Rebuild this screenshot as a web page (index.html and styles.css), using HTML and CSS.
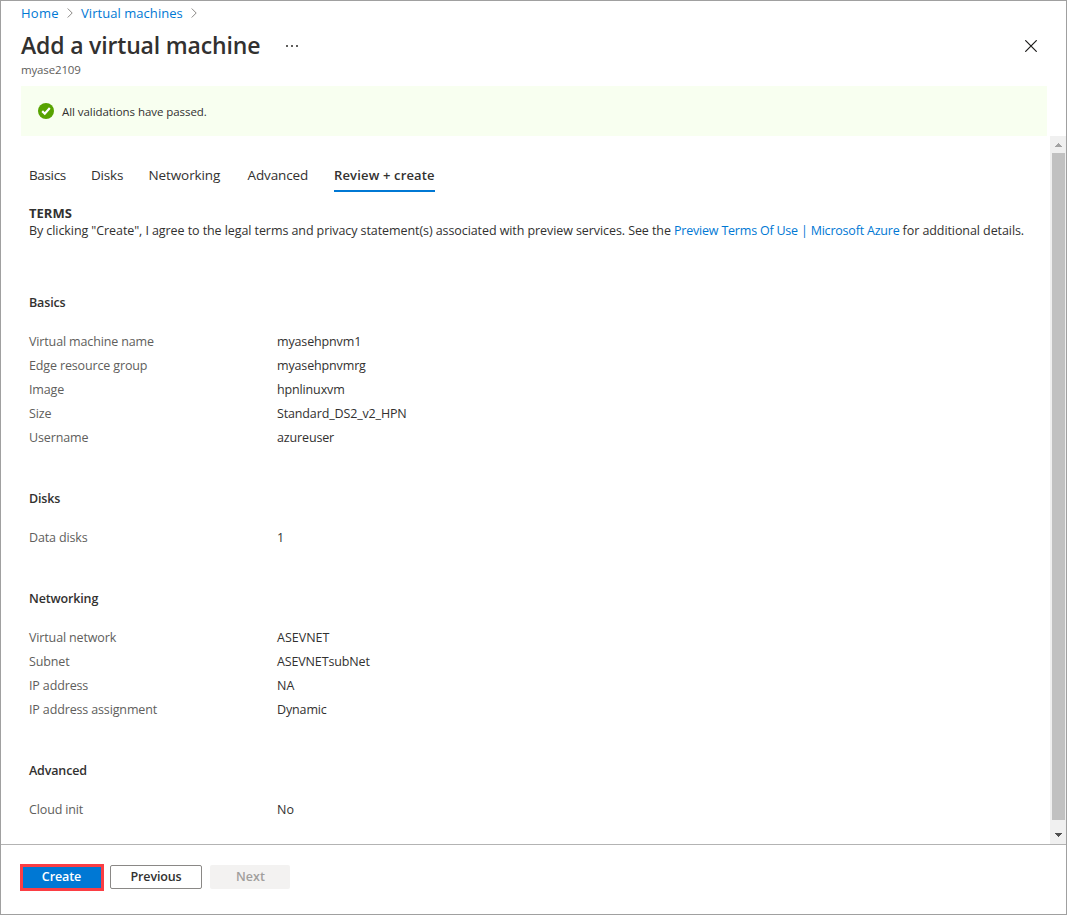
FILE: index.html
```
<!DOCTYPE html>
<html lang="en">
<head>
<meta charset="utf-8">
<title>Add a virtual machine</title>
<link rel="stylesheet" href="styles.css">
</head>
<body>
<div class="blade">
  <header class="header">
    <nav class="crumbs">
      <a class="crumb-home">Home</a>
      <svg class="chevron" width="6" height="10" viewBox="0 0 6 10"><path d="M.7.5 5.2 5 .7 9.5"/></svg>
      <a class="crumb-vms">Virtual machines</a>
      <svg class="chevron" width="6" height="10" viewBox="0 0 6 10"><path d="M.7.5 5.2 5 .7 9.5"/></svg>
    </nav>
    <div class="title-row">
      <h1 class="title">Add a virtual machine</h1>
      <svg class="more" width="12" height="2" viewBox="0 0 12 2"><path d="M0 0h2v2H0zM5 0h2v2H5zM10 0h2v2h-2z"/></svg>
      <svg class="close" width="12" height="12" viewBox="0 0 12 12"><path d="M.3.3l11.4 11.4M11.7.3.3 11.7"/></svg>
    </div>
    <div class="subtitle"><span>myase2109</span></div>
  </header>
  <div class="banner">
    <svg width="16" height="16" viewBox="0 0 16 16"><circle cx="8" cy="8" r="8" fill="#57a300"/><path d="M4.2 8.1l2.6 2.6 5-5.6" fill="none" stroke="#fff" stroke-width="2.2"/></svg>
    <span class="banner-text">All validations have passed.</span>
  </div>
  <div class="scroll-area">
    <main class="content">
      <nav class="tabs">
        <a class="tab tab-basics">Basics</a>
        <a class="tab tab-disks">Disks</a>
        <a class="tab tab-networking">Networking</a>
        <a class="tab tab-advanced">Advanced</a>
        <a class="tab tab-review">Review + create</a>
      </nav>
      <section class="terms">
        <h2 class="terms-title">TERMS</h2>
        <p class="terms-text">By clicking "Create", I agree to the legal terms and privacy statement(s) associated with preview services. See the <a>Preview Terms Of Use | Microsoft Azure</a> for additional details.</p>
      </section>
      <section class="group">
        <h3>Basics</h3>
        <dl>
          <dt>Virtual machine name</dt><dd>myasehpnvm1</dd>
          <dt>Edge resource group</dt><dd>myasehpnvmrg</dd>
          <dt>Image</dt><dd>hpnlinuxvm</dd>
          <dt>Size</dt><dd>Standard_DS2_v2_HPN</dd>
          <dt>Username</dt><dd>azureuser</dd>
        </dl>
      </section>
      <section class="group">
        <h3>Disks</h3>
        <dl>
          <dt>Data disks</dt><dd>1</dd>
        </dl>
      </section>
      <section class="group">
        <h3>Networking</h3>
        <dl>
          <dt>Virtual network</dt><dd class="caps">ASEVNET</dd>
          <dt>Subnet</dt><dd>ASEVNETsubNet</dd>
          <dt>IP address</dt><dd class="caps">NA</dd>
          <dt>IP address assignment</dt><dd>Dynamic</dd>
        </dl>
      </section>
      <section class="group">
        <h3>Advanced</h3>
        <dl>
          <dt>Cloud init</dt><dd class="caps">No</dd>
        </dl>
      </section>
    </main>
    <div class="scrollbar">
      <svg width="7" height="4" viewBox="0 0 7 4" fill="#a3a3a3"><path d="M3 0h1v1h1v1h1v1h1v1H0V3h1V2h1V1h1z"/></svg>
      <div class="thumb"></div>
      <svg width="7" height="4" viewBox="0 0 7 4" fill="#505050"><path d="M0 0h7v1H6v1H5v1H4v1H3V3H2V2H1V1H0z"/></svg>
    </div>
  </div>
  <footer class="footer">
    <button class="btn create">Create</button>
    <button class="btn previous">Previous</button>
    <button class="btn next" disabled>Next</button>
  </footer>
</div>
</body>
</html>
```
FILE: styles.css
```
* { box-sizing: border-box; }
body { margin: 0; background: #fff; }
h1, h2, h3, p, dl, dd { margin: 0; }
a { color: #0078d4; text-decoration: none; }
svg { display: block; flex: none; }

.blade {
  width: 1067px;
  height: 915px;
  border: 1px solid #a0a0a0;
  display: flex;
  flex-direction: column;
  font-family: "Open Sans", "Noto Sans", sans-serif;
  font-size: 12.5px;
  color: #323130;
  white-space: nowrap;
  overflow: hidden;
}

.header { height: 85px; padding: 0 20px; flex: none; }
.crumbs { display: flex; align-items: center; height: 24px; font-size: 13px; }
.crumb-home { width: 38px; letter-spacing: 0.25px; }
.crumb-vms { width: 102px; letter-spacing: 0.05px; }
.chevron { margin: 0 8px; fill: none; stroke: #8a8886; stroke-width: 1; }
.title-row { display: flex; align-items: center; height: 39px; padding-top: 1px; }
.title { width: 265px; font-size: 23px; font-weight: 600; line-height: 38px; letter-spacing: -0.17px; }
.more { margin-top: 2px; fill: #605e5c; }
.close { margin: 1px 9px 0 auto; fill: none; stroke: #1b1a19; stroke-width: 1.2; }
.subtitle { font-size: 11.5px; line-height: 12px; color: #605e5c; letter-spacing: -0.15px; }

.banner {
  display: flex;
  align-items: center;
  gap: 8px;
  flex: none;
  height: 50px;
  margin: 0 19px 0 20px;
  padding-left: 17px;
  background: #f8fff0;
}
.banner-text { font-size: 11.5px; letter-spacing: -0.06px; }

.scroll-area { display: flex; flex: none; height: 708px; }
.content { flex: 1; padding: 24px 0 0 28px; min-width: 0; }
.tabs { display: flex; height: 32px; font-size: 13.5px; }
.tab { color: #323130; line-height: 30px; height: 32px; }
.tab-basics { width: 62px; letter-spacing: -0.35px; }
.tab-disks { width: 57.5px; letter-spacing: -0.2px; }
.tab-networking { width: 99px; letter-spacing: -0.1px; }
.tab-advanced { width: 86.5px; letter-spacing: -0.12px; }
.tab-review { width: 101px; font-weight: 600; font-size: 13px; letter-spacing: 0.16px; border-bottom: 2px solid #0078d4; }

.terms { height: 98px; padding-top: 12px; }
.terms-title { font-size: 13px; font-weight: 700; line-height: 18px; letter-spacing: 0; }
.terms-text { line-height: 17px; letter-spacing: -0.079px; }
.terms-text a { letter-spacing: -0.21px; }

.group { padding-bottom: 36px; }
.group h3 { height: 40px; padding-top: 3px; font-size: 12.5px; font-weight: 600; line-height: 20px; letter-spacing: -0.15px; }
dl { display: grid; grid-template-columns: 248px 1fr; grid-auto-rows: 24px; line-height: 23px; letter-spacing: -0.14px; }
dt { color: #605e5c; }
.caps { letter-spacing: 0; }

.scrollbar {
  display: flex;
  flex-direction: column;
  align-items: center;
  width: 16px;
  padding-top: 7px;
  background: #f0f0f0;
}
.thumb { width: 13px; height: 667px; margin: 6px 0 13px; background: #c1c1c1; }

.footer {
  display: flex;
  align-items: flex-start;
  flex: 1;
  padding: 19px 19px 0;
  border-top: 1px solid #b3b3b3;
}
.btn { font: 600 12.5px/20px "Open Sans", "Noto Sans", sans-serif; color: #323130; padding: 0; height: 24px; border-radius: 2px; }
.create { width: 84px; height: 27px; padding: 0 1px 2px 0; border: 3px solid #fb3e44; border-radius: 0; background: #0078d4; color: #fff; letter-spacing: -0.1px; }
.previous { width: 92px; margin: 1px 8px 0 6px; border: 1px solid #8a8886; background: #fff; letter-spacing: -0.15px; }
.next { width: 80px; margin-top: 1px; padding-left: 1px; border: 0; background: #f3f2f1; color: #a19f9d; }
```
